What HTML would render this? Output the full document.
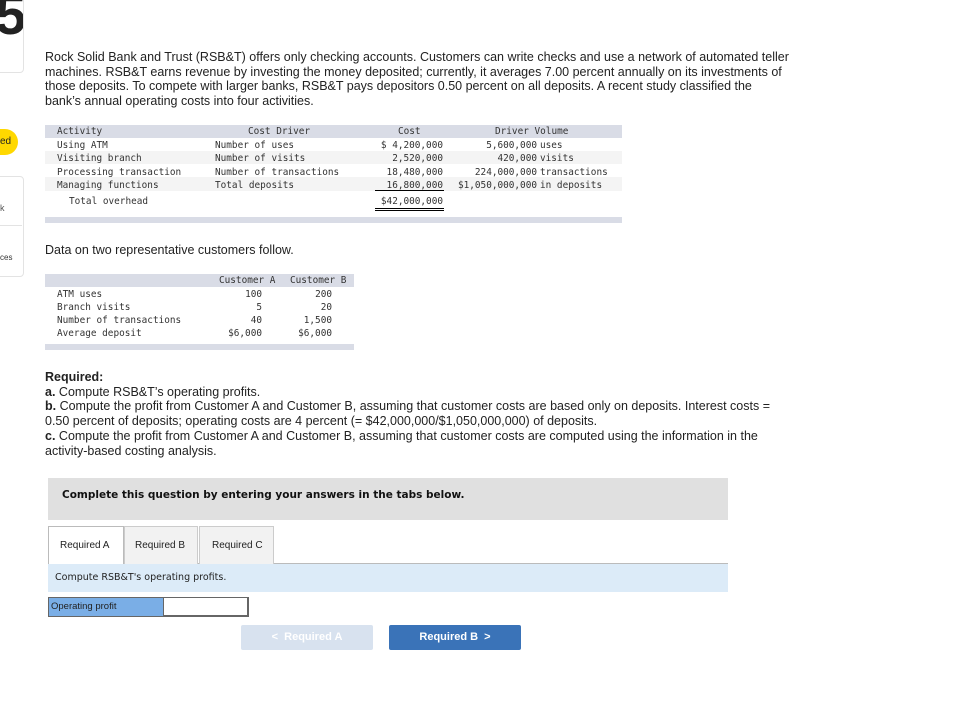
<!DOCTYPE html>
<html><head><style>
body{margin:0;width:972px;height:714px;background:#fff;position:relative;overflow:hidden;font-family:"Liberation Sans",Arial,sans-serif;color:#222}
.a{position:absolute;white-space:nowrap}
.m{font-family:"DejaVu Sans Mono","Liberation Mono",monospace;font-size:9.4px;color:#333}
.p{font-size:12.5px;line-height:14.7px;color:#222}
.band{position:absolute;background:#d9dce6}
.stripe{position:absolute;background:#f4f4f4}
.r{text-align:right}
</style></head><body>
<div class="a" style="left:-10px;top:-5px;width:32px;height:76px;border:1px solid #e3e3e3;border-radius:4px;overflow:hidden"><div style="position:absolute;left:4px;top:-14px;font-size:56px;font-weight:bold;color:#222">5</div></div>
<div class="a" style="left:-20px;top:129px;width:38px;height:26px;background:#ffd800;border-radius:13px"></div>
<div class="a" style="left:0;top:136px;font-size:10px">ed</div>
<div class="a" style="left:-10px;top:176px;width:32px;height:99px;border:1px solid #e3e3e3;border-radius:4px"></div>
<div class="a" style="left:-10px;top:225px;width:32px;height:1px;background:#e3e3e3"></div>
<div class="a" style="left:0;top:203px;font-size:9px;color:#555">k</div>
<div class="a" style="left:0;top:253px;font-size:8px;color:#333">ces</div>

<div class="a p" style="left:45px;top:50px">Rock Solid Bank and Trust (RSB&amp;T) offers only checking accounts. Customers can write checks and use a network of automated teller<br>machines. RSB&amp;T earns revenue by investing the money deposited; currently, it averages 7.00 percent annually on its investments of<br>those deposits. To compete with larger banks, RSB&amp;T pays depositors 0.50 percent on all deposits. A recent study classified the<br>bank’s annual operating costs into four activities.</div>

<div class="band" style="left:45px;top:125px;width:577px;height:13px"></div>
<div class="stripe" style="left:45px;top:151px;width:577px;height:13px"></div>
<div class="stripe" style="left:45px;top:177px;width:577px;height:14px"></div>
<div class="band" style="left:45px;top:217px;width:577px;height:6px"></div>
<div class="a m" style="left:57px;top:126px">Activity</div>
<div class="a m" style="left:248px;top:126px">Cost Driver</div>
<div class="a m" style="left:398px;top:126px">Cost</div>
<div class="a m" style="left:495px;top:126px">Driver Volume</div>
<div class="a m" style="left:57px;top:139px;line-height:13.3px">Using ATM<br>Visiting branch<br>Processing transaction<br>Managing functions</div>
<div class="a m" style="left:215px;top:139px;line-height:13.3px">Number of uses<br>Number of visits<br>Number of transactions<br>Total deposits</div>
<div class="a m r" style="left:340px;width:103px;top:139px;line-height:13.3px">$ 4,200,000<br>2,520,000<br>18,480,000<br>16,800,000</div>
<div class="a m r" style="left:420px;width:117px;top:139px;line-height:13.3px">5,600,000<br>420,000<br>224,000,000<br>$1,050,000,000</div>
<div class="a m" style="left:540px;top:139px;line-height:13.3px">uses<br>visits<br>transactions<br>in deposits</div>
<div class="a m" style="left:69px;top:196px">Total overhead</div>
<div class="a m r" style="left:340px;width:103px;top:196px">$42,000,000</div>
<div class="a" style="left:375px;top:190px;width:69px;height:1px;background:#000"></div>
<div class="a" style="left:375px;top:208px;width:69px;height:1px;background:#000"></div>
<div class="a" style="left:375px;top:210px;width:69px;height:1px;background:#000"></div>

<div class="a p" style="left:45px;top:243px">Data on two representative customers follow.</div>

<div class="band" style="left:45px;top:274px;width:309px;height:13px"></div>
<div class="band" style="left:45px;top:344px;width:309px;height:6px"></div>
<div class="a m" style="left:219px;top:275px">Customer A</div>
<div class="a m" style="left:290px;top:275px">Customer B</div>
<div class="a m" style="left:57px;top:288px;line-height:13px">ATM uses<br>Branch visits<br>Number of transactions<br>Average deposit</div>
<div class="a m r" style="left:200px;width:62px;top:288px;line-height:13px">100<br>5<br>40<br>$6,000</div>
<div class="a m r" style="left:270px;width:62px;top:288px;line-height:13px">200<br>20<br>1,500<br>$6,000</div>

<div class="a p" style="left:45px;top:370px"><b>Required:</b><br><b>a.</b> Compute RSB&amp;T’s operating profits.<br><b>b.</b> Compute the profit from Customer A and Customer B, assuming that customer costs are based only on deposits. Interest costs =<br>0.50 percent of deposits; operating costs are 4 percent (= $42,000,000/$1,050,000,000) of deposits.<br><b>c.</b> Compute the profit from Customer A and Customer B, assuming that customer costs are computed using the information in the<br>activity-based costing analysis.</div>

<div class="a" style="left:48px;top:478px;width:680px;height:42px;background:#e0e0e0"></div>
<div class="a" style="left:62px;top:489px;font-family:'DejaVu Sans',Verdana,sans-serif;font-size:10.5px;font-weight:bold;color:#111">Complete this question by entering your answers in the tabs below.</div>

<div class="a" style="left:48px;top:563px;width:680px;height:1px;background:#bbb"></div>
<div class="a" style="left:48px;top:526px;width:74px;height:38px;border:1px solid #bbb;border-bottom:none;background:#fff"></div>
<div class="a" style="left:124px;top:526px;width:72px;height:37px;border:1px solid #ccc;border-bottom:none;background:#f2f2f2"></div>
<div class="a" style="left:199px;top:526px;width:73px;height:37px;border:1px solid #ccc;border-bottom:none;background:#f2f2f2"></div>
<div class="a" style="left:60px;top:540px;font-size:10px">Required A</div>
<div class="a" style="left:135px;top:540px;font-size:10px">Required B</div>
<div class="a" style="left:212px;top:540px;font-size:10px">Required C</div>
<div class="a" style="left:48px;top:564px;width:680px;height:28px;background:#dcebf8"></div>
<div class="a" style="left:55px;top:572px;font-family:'DejaVu Sans',Verdana,sans-serif;font-size:9.5px;color:#222">Compute RSB&amp;T's operating profits.</div>

<div class="a" style="left:48px;top:597px;width:114px;height:18px;background:#7aaee6;border:1px solid #666"></div>
<div class="a" style="left:51px;top:601px;font-size:9.5px;color:#222">Operating profit</div>
<div class="a" style="left:163px;top:597px;width:83px;height:17px;background:#fff;border:1px solid #666;border-width:1px 2px 2px 1px"></div>

<div class="a" style="left:241px;top:625px;width:132px;height:25px;background:#d8e2ef;border-radius:2px;color:#fff;font-size:11px;font-weight:bold;text-align:center;line-height:25px">&lt;&nbsp;&nbsp;Required A</div>
<div class="a" style="left:389px;top:625px;width:132px;height:25px;background:#3a73b8;border-radius:2px;color:#fff;font-size:11px;font-weight:bold;text-align:center;line-height:25px">Required B&nbsp;&nbsp;&gt;</div>
</body></html>
